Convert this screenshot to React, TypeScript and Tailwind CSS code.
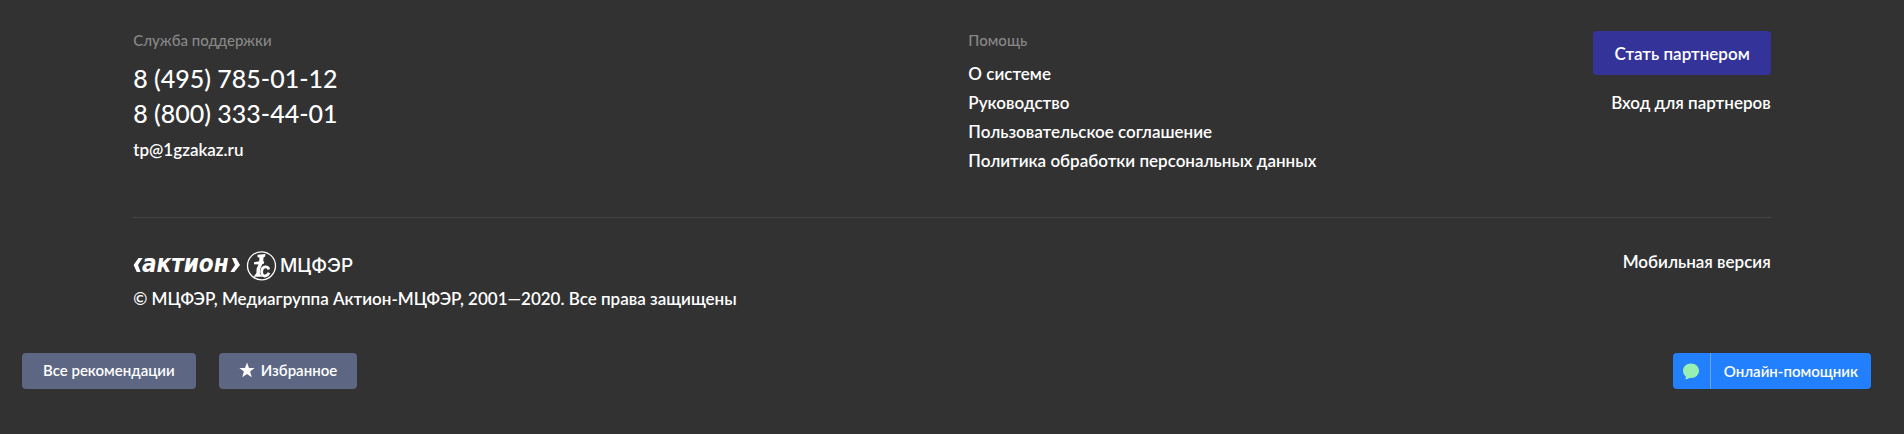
const HELP_LINKS = [
  'О системе',
  'Руководство',
  'Пользовательское соглашение',
  'Политика обработки персональных данных',
];

function GroupLogo() {
  return (
    <svg
      width="222"
      height="30"
      viewBox="0 0 222 30"
      role="img"
      aria-label="Актион МЦФЭР"
      className="block"
    >
      <g fill="#fff">
        <path d="M5.500 7 L9.600 7 L5 14 L7.600 21 L3.800 21 L0.600 14 Z" />
        <path d="M99 7 L103 7 L107 14 L101.300 21 L97.300 21 L102 14 Z" />
      </g>
      <text
        x="9"
        y="20.500"
        fill="#fff"
        fontSize="24"
        fontStyle="italic"
        fontWeight="700"
        fontFamily="'DejaVu Sans Condensed', 'DejaVu Sans', sans-serif"
      >
        актион
      </text>
      <circle cx="128.500" cy="14.800" r="14" fill="none" stroke="#fff" strokeWidth="1.300" />
      <g fill="#fff">
        <path d="M124.500 3.800 L132.500 3 L132 5.800 L130.600 6.200 L130.200 10.300 L131.200 10.600 L130.800 12.800 L129.200 13.300 L127.200 18 L126.800 22.500 L129.500 25.800 L120.500 25.800 L123.400 22 L123.600 17.500 L125.600 13.500 L121 13.300 L121 11.300 L126.200 10.300 L126.400 6.500 L124.500 6.300 Z" />
      </g>
      <path
        d="M135.700 18.500 C135 14.800 130.200 15.200 129 18.500 C127.800 22.300 129.500 25.500 132.600 24.900 C134.400 24.500 135.400 23.200 136 21.700"
        fill="none"
        stroke="#fff"
        strokeWidth="2.800"
      />
      <text
        x="147"
        y="20.500"
        fill="#fff"
        fontSize="19"
        fontWeight="500"
        fontFamily="Inter, sans-serif"
      >
        МЦФЭР
      </text>
    </svg>
  );
}

function StarIcon() {
  return (
    <svg width="16" height="16" viewBox="0 0 16 16" fill="#fff" aria-hidden="true">
      <path d="M8 0.500 L10 6 L15.600 6 L11.100 9.500 L12.800 15.300 L8 11.900 L3.200 15.300 L4.900 9.500 L0.400 6 L6 6 Z" />
    </svg>
  );
}

function ChatIcon() {
  return (
    <svg width="16" height="17" viewBox="0 0 16 17" fill="#97f0b2" aria-hidden="true">
      <path d="M8 0.500 C12.500 0.500 16 3.700 16 7.800 C16 11.900 12.500 15 8 15 C6.800 15 6.200 15.100 5.400 15.600 C4.400 16.200 3.300 16.500 2.200 16.300 C2.900 15.500 3 14.400 2.700 13.300 C1 12 0 10 0 7.800 C0 3.700 3.500 0.500 8 0.500 Z" />
    </svg>
  );
}

export default function App() {
  return (
    <footer className="flex min-h-screen flex-col bg-[#323232] pt-[27px] font-['Lato','Noto_Sans',sans-serif] text-[17px] font-semibold leading-[29px] text-white">
      <div className="px-[7%]">
        <div className="flex border-b border-[#444444] pb-[42px]">
          <section className="w-[51%]">
            <h2 className="text-[15px] font-medium leading-[26px] text-[#888888]">Служба поддержки</h2>
            <div className="mt-2 flex flex-col items-start text-[25px] font-medium leading-[35px]">
              <a href="tel:84957850112">8 (495) 785-01-12</a>
              <a href="tel:88003334401">8 (800) 333-44-01</a>
            </div>
            <a href="mailto:tp@1gzakaz.ru" className="mt-1 inline-block">
              tp@1gzakaz.ru
            </a>
          </section>
          <nav aria-labelledby="help-title">
            <h2 id="help-title" className="text-[15px] font-medium leading-[26px] text-[#888888]">
              Помощь
            </h2>
            <ul className="mt-1.5">
              {HELP_LINKS.map((label) => (
                <li key={label}>
                  <a href="#">{label}</a>
                </li>
              ))}
            </ul>
          </nav>
          <div className="ml-auto flex flex-col items-end pt-1">
            <button type="button" className="h-11 rounded bg-[#333399] px-[21px]">
              Стать партнером
            </button>
            <a href="#" className="mt-[13px]">
              Вход для партнеров
            </a>
          </div>
        </div>
        <div className="flex items-start justify-between pt-[33px]">
          <div>
            <GroupLogo />
            <p className="mt-[3px]">© МЦФЭР, Медиагруппа Актион-МЦФЭР, 2001—2020. Все права защищены</p>
          </div>
          <a href="#" className="-mt-1">Мобильная версия</a>
        </div>
      </div>
      <div className="mt-10 flex items-center gap-[23px] pr-[33px] pl-[22px] text-[15px] leading-6">
        <button type="button" className="h-9 rounded bg-[#5d6783] px-[21px] pb-0.5">
          Все рекомендации
        </button>
        <button type="button" className="flex h-9 items-center gap-1.5 rounded bg-[#5d6783] px-5 pb-0.5">
          <StarIcon />
          Избранное
        </button>
        <button type="button" className="ml-auto flex h-9 items-stretch rounded bg-[#2280ff]">
          <span className="flex w-[38px] items-center justify-center border-r border-[#64a6ff]">
            <ChatIcon />
          </span>
          <span className="flex items-center px-[13px]">Онлайн-помощник</span>
        </button>
      </div>
    </footer>
  );
}
